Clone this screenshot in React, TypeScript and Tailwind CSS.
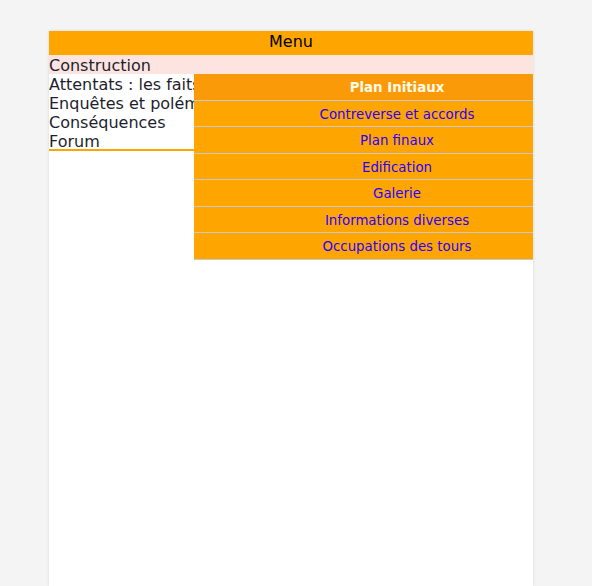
import React from "react";

const sub = [
  "Contreverse et accords",
  "Plan finaux",
  "Edification",
  "Galerie",
  "Informations diverses",
  "Occupations des tours",
];

export default function App() {
  return (
    <div className="min-h-[586px] bg-[#f4f4f4] pt-[31px]" style={{ fontFamily: '"DejaVu Sans", Verdana, sans-serif' }}>
      <div className="ml-[49px] w-[484px] h-[555px] bg-white shadow-[0_0_3px_rgba(0,0,0,0.12)]">
        <div className="h-[24px] bg-[#ffa500] text-center text-[16px] leading-[22px] text-black">Menu</div>
        <ul className="text-[16px] leading-[19px] text-[#1e1e2e] border-b-2 border-[#ffa500]">
          <li className="relative bg-[#fde4e1] pt-[1px] h-[19px]">
            Construction
            <div className="absolute left-[145px] top-full w-[339px] z-10 text-[13.33px] text-center pl-[67px] bg-[#ffa500]">
              <div className="h-[26.57px] leading-[27px] -ml-[67px] pl-[67px] bg-[#fb9a08] text-[#fffbe8] font-bold border-b border-[#c8c8c8]">
                Plan Initiaux
              </div>
              {sub.map((s) => (
                <div key={s} className="h-[26.57px] leading-[27px] -ml-[67px] pl-[67px] bg-[#ffa500] text-[#2a00ff] border-b border-[#c8c8c8]">
                  {s}
                </div>
              ))}
            </div>
          </li>
          <li className="pt-[1px] h-[19px]">Attentats&nbsp;: les faits</li>
          <li className="pt-[1px] h-[19px]">Enquêtes et polémiques</li>
          <li className="pt-[1px] h-[19px]">Conséquences</li>
          <li className="pt-[1px] h-[19px] mb-[-1px]">Forum</li>
        </ul>
      </div>
    </div>
  );
}
